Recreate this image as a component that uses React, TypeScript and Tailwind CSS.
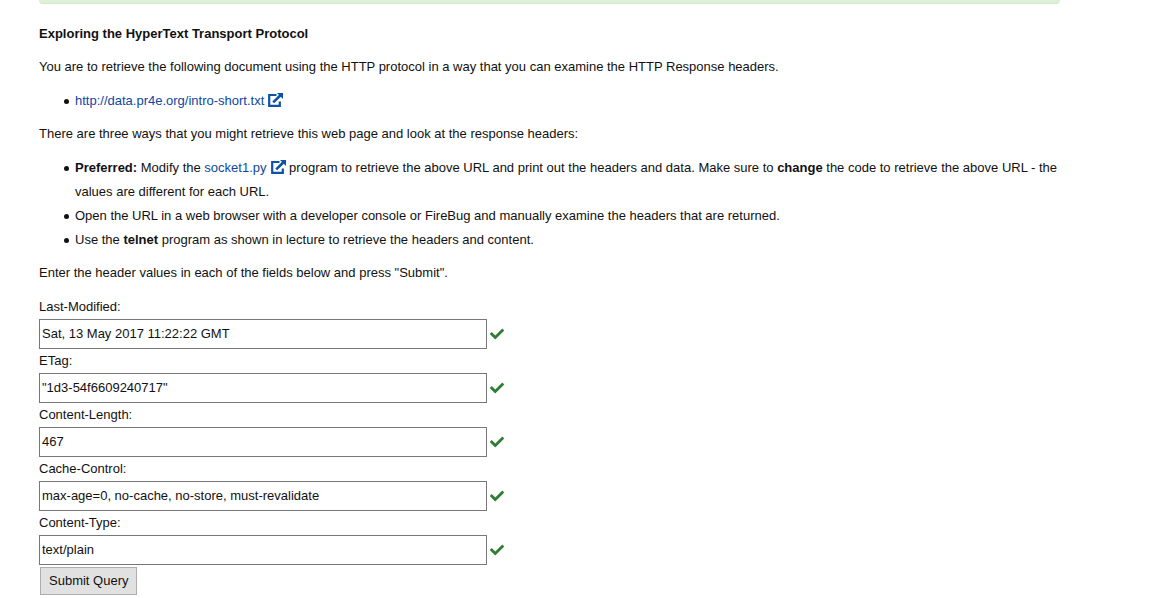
import type { ReactNode } from "react";
import { FaCheck } from "react-icons/fa";

const fields = [
  { id: "modified", label: "Last-Modified:", value: "Sat, 13 May 2017 11:22:22 GMT" },
  { id: "etag", label: "ETag:", value: '"1d3-54f6609240717"' },
  { id: "length", label: "Content-Length:", value: "467" },
  { id: "cache", label: "Cache-Control:", value: "max-age=0, no-cache, no-store, must-revalidate" },
  { id: "type", label: "Content-Type:", value: "text/plain" },
];

function ExternalLink({ href, text }: { href: string; text: string }) {
  return (
    <a href={href} className="text-[#0d47a1]">
      {text}
      <svg viewBox="0 0 15 14" className="ml-1 inline h-[14px] w-[15px] align-[-2px]" aria-hidden="true">
        <path d="M8.5 2H1.2v10.8h10.6V8.5" fill="none" stroke="#0d51a8" strokeWidth="2.2" />
        <path d="M5.2 9.4L12.5 2.2" fill="none" stroke="#0d51a8" strokeWidth="2.6" />
        <path d="M9 0H15V6Z" fill="#0d51a8" />
      </svg>
    </a>
  );
}

function Item({ children }: { children: ReactNode }) {
  return (
    <li className="before:mr-[6px] before:-ml-[11px] before:inline-block before:size-[5px] before:rounded-full before:bg-[#111] before:align-[1px] before:content-['']">
      {children}
    </li>
  );
}

export default function App() {
  return (
    <main className="pr-[99px] pl-[39px] font-['Liberation_Sans',Arial,sans-serif] text-[13px] leading-6 text-[#111]">
      <div className="h-1 rounded-b border-b border-[#d0e9c6] bg-[#dff0d8]" />
      <h1 className="mt-[18px] font-bold">Exploring the HyperText Transport Protocol</h1>
      <p className="mt-[9px]">
        You are to retrieve the following document using the HTTP protocol in a way that you can examine the HTTP Response headers.
      </p>
      <ul className="mt-[10px] pl-9">
        <Item><ExternalLink href="http://data.pr4e.org/intro-short.txt" text="http://data.pr4e.org/intro-short.txt" /></Item>
      </ul>
      <p className="mt-[9px]">There are three ways that you might retrieve this web page and look at the response headers:</p>
      <ul className="mt-[10px] pl-9">
        <Item>
          <b>Preferred:</b> Modify the <ExternalLink href="#socket1" text="socket1.py" /> program to retrieve the above URL and print out the headers and data. Make sure to <b>change</b> the code to retrieve the above URL - the values are different for each URL.
        </Item>
        <Item>Open the URL in a web browser with a developer console or FireBug and manually examine the headers that are returned.</Item>
        <Item>Use the <b>telnet</b> program as shown in lecture to retrieve the headers and content.</Item>
      </ul>
      <p className="mt-[9px]">Enter the header values in each of the fields below and press "Submit".</p>
      <form className="mt-[10px]">
        {fields.map((f) => (
          <div key={f.id}>
            <label htmlFor={f.id} className="block">{f.label}</label>
            <div className="flex items-center gap-[3px]">
              <input id={f.id} defaultValue={f.value} className="h-[30px] w-[448px] border border-[#777] bg-white px-[2px] pb-[2px]" />
              <FaCheck className="size-[14px] text-[#2e7d32]" aria-hidden="true" />
            </div>
          </div>
        ))}
        <button type="button" className="mt-[2px] ml-px block h-7 border border-[#adadad] bg-[#e1e1e1] px-2">Submit Query</button>
      </form>
    </main>
  );
}
